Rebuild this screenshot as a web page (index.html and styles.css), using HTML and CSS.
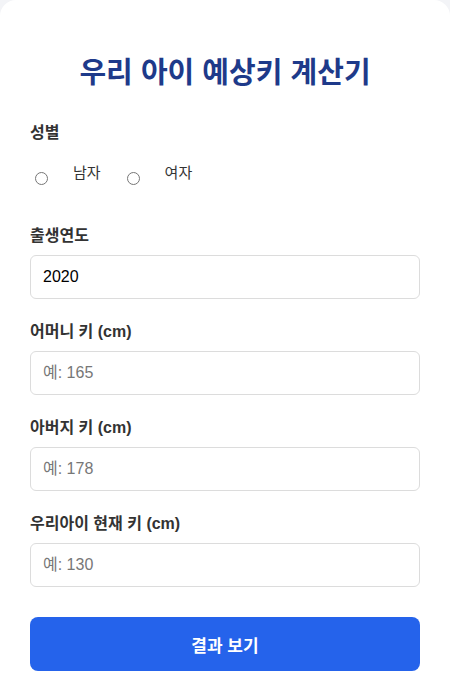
FILE: index.html
```html
<!DOCTYPE html>
<html lang="ko">
<head>
<meta charset="utf-8">
<title>우리 아이 예상키 계산기</title>
<link rel="stylesheet" href="styles.css">
</head>
<body>
<div class="card">
  <h1 class="title">우리 아이 예상키 계산기</h1>
  <div class="group">
    <div class="label">성별</div>
    <div class="radio-row">
      <label class="radio-opt"><input type="radio" name="gender" class="radio"><span class="radio-text">남자</span></label>
      <label class="radio-opt"><input type="radio" name="gender" class="radio"><span class="radio-text">여자</span></label>
    </div>
  </div>
  <div class="group">
    <label class="label" for="year">출생연도</label>
    <input id="year" class="field" type="text" value="2020">
  </div>
  <div class="group">
    <label class="label" for="mom">어머니 키 (cm)</label>
    <input id="mom" class="field" type="text" placeholder="예: 165">
  </div>
  <div class="group">
    <label class="label" for="dad">아버지 키 (cm)</label>
    <input id="dad" class="field" type="text" placeholder="예: 178">
  </div>
  <div class="group">
    <label class="label" for="kid">우리아이 현재 키 (cm)</label>
    <input id="kid" class="field" type="text" placeholder="예: 130">
  </div>
  <button class="submit" type="button">결과 보기</button>
</div>
</body>
</html>
```
FILE: styles.css
```css
html, body {
  margin: 0;
  padding: 0;
}
body {
  background: #f3f4f7;
  font-family: "Liberation Sans", "Noto Sans CJK KR", sans-serif;
  color: #333;
}
.card {
  background: #fff;
  border-radius: 16px;
  padding: 30px 30px 40px;
  min-height: 700px;
  box-sizing: border-box;
}
.title {
  font-family: "Noto Sans CJK KR", sans-serif;
  font-size: 29px;
  line-height: 36px;
  font-weight: 700;
  color: #1e3a8a;
  text-align: center;
  margin: 22px 0 36px;
}
.group {
  margin-bottom: 24px;
}
.label {
  display: block;
  font-size: 16px;
  line-height: 18px;
  font-weight: 700;
  color: #333;
  margin-bottom: 10px;
}
.radio-row {
  display: flex;
  align-items: flex-start;
  gap: 21px;
  height: 51px;
  padding-top: 10px;
  box-sizing: border-box;
}
.radio-opt {
  display: flex;
  align-items: flex-start;
}
.radio {
  width: 13px;
  height: 13px;
  margin: 10px 25px 0 5px;
}
.radio-text {
  font-size: 15px;
  line-height: 22px;
  color: #333;
}
.field {
  display: block;
  width: 100%;
  height: 44px;
  box-sizing: border-box;
  padding: 0 12px;
  border: 1px solid #dcdcdc;
  border-radius: 6px;
  font-family: "Liberation Sans", "Noto Sans CJK KR", sans-serif;
  font-size: 16px;
  color: #000;
  background: #fff;
}
.field::placeholder {
  color: #777;
}
.submit {
  display: block;
  width: 100%;
  height: 54px;
  margin-top: 30px;
  border: none;
  border-radius: 8px;
  background: #2563eb;
  color: #fff;
  font-family: "Noto Sans CJK KR", sans-serif;
  font-size: 17px;
  font-weight: 700;
}
```
